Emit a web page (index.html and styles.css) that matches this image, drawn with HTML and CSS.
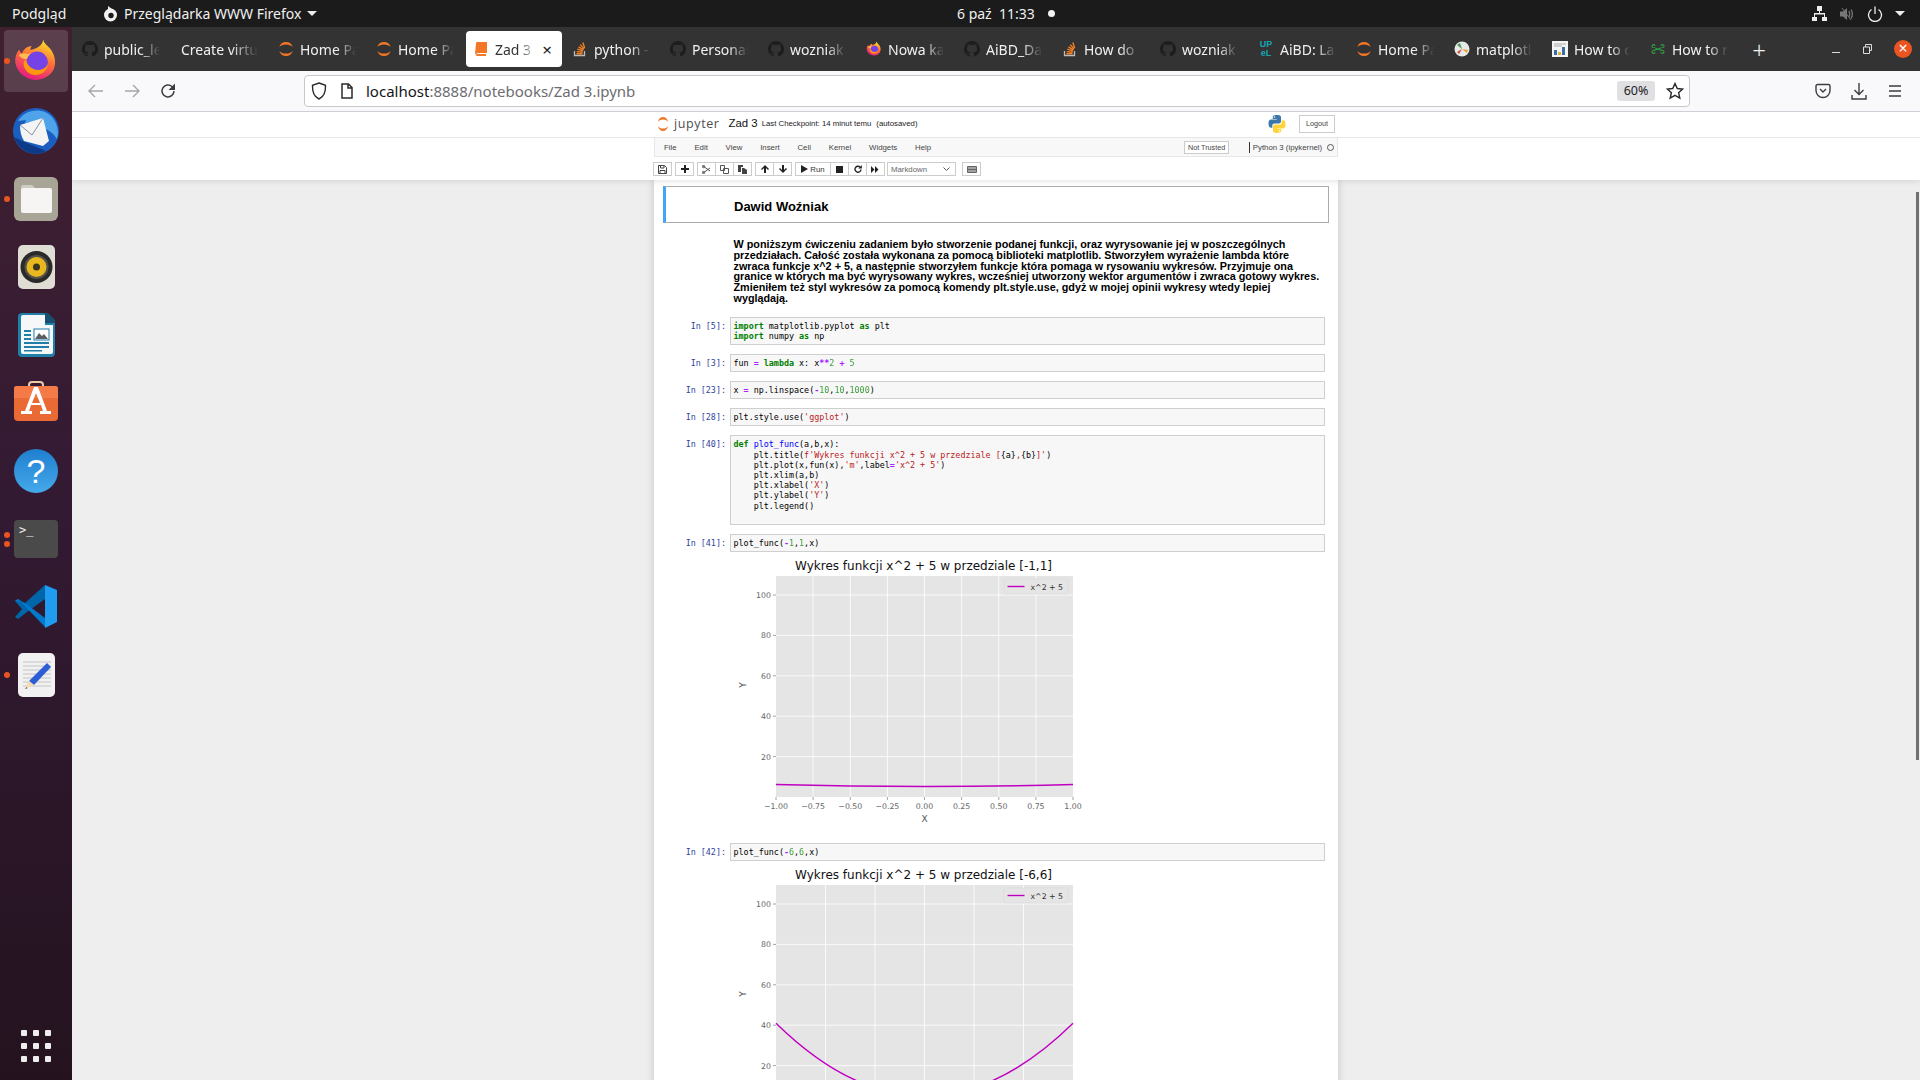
FILE: index.html
```html
<!DOCTYPE html>
<html lang="pl">
<head>
    <meta charset="UTF-8">
    <meta name="viewport" content="width=device-width, initial-scale=1.0">
    <title>Zad 3 - Jupyter Notebook</title>
    <link rel="stylesheet" href="styles.css">
</head>
<body>

    <svg class="defs" width="0" height="0">
        <defs>
            <symbol id="gh" viewBox="0 0 16 16">
                <path fill="#1d1d1f" d="M8 0a8 8 0 0 0-2.5 15.6c.4.1.5-.2.5-.4v-1.4c-2.2.5-2.7-1-2.7-1-.4-.9-.9-1.2-.9-1.2-.7-.5.1-.5.1-.5.8.1 1.2.8 1.2.8.7 1.2 1.9.9 2.3.7.1-.5.3-.9.5-1.1-1.8-.2-3.6-.9-3.6-4 0-.9.3-1.6.8-2.1-.1-.2-.4-1 .1-2.1 0 0 .7-.2 2.2.8a7.5 7.5 0 0 1 4 0c1.5-1 2.2-.8 2.2-.8.5 1.1.2 1.9.1 2.1.5.5.8 1.2.8 2.1 0 3.1-1.9 3.8-3.7 4 .3.3.6.7.6 1.5v2.2c0 .2.1.5.5.4A8 8 0 0 0 8 0z"/>
            </symbol>
            <symbol id="jup" viewBox="0 0 16 16">
                <path fill="#f37726" d="M8 12.6c-2.9 0-5.4-1-6.7-2.6a7 7 0 0 0 13.4 0c-1.3 1.6-3.8 2.6-6.7 2.6z"/>
                <path fill="#f37726" d="M8 3.4c2.9 0 5.4 1 6.7 2.6A7 7 0 0 0 1.3 6C2.6 4.4 5.1 3.4 8 3.4z"/>
            </symbol>
            <symbol id="so" viewBox="0 0 16 16">
                <path fill="none" stroke="#bcbbbb" stroke-width="1.3" d="M2.5 10v4.5h10V10"/>
                <path fill="none" stroke="#f48024" stroke-width="1.4" d="M4.5 12.8h6M4.7 10.6l5.9.7M5.3 8.2l5.6 1.7M6.5 5.8l5 3M8.3 3.6l3.8 4.5M10.8 1.5l1.9 5.4"/>
            </symbol>
            <symbol id="fx" viewBox="0 0 32 32">
                <defs>
                    <linearGradient id="fxg" x1="0.7" y1="0" x2="0.3" y2="1">
                        <stop offset="0" stop-color="#ffe226"/>
                        <stop offset="0.45" stop-color="#ff7139"/>
                        <stop offset="1" stop-color="#e31587"/>
                    </linearGradient>
                </defs>
                <path fill="url(#fxg)" d="M21 1c.6 3.4 4 4.6 6 8 2.6 4.3 3.2 9.6.6 14.2A14.5 14.5 0 0 1 1.6 17C1.3 13.8 2.2 10.5 4.3 8c.3 1.3 1 2.2 2 2.7C7.4 7.6 10 5.8 13 5.6c-.9 1.1-1 2-.8 2.7 3.4-.8 8.6-2.6 8.8-7.300z"/>
                <path fill="#ffbd4f" d="M4 12c2-1.5 4.5-1.8 6.5-.8 1.7-.6 3.5-.7 5-.2-3 .3-5 1.8-5.8 3.8-2 .1-4-.8-5.700-2.800z"/>
                <circle cx="16.8" cy="16.8" r="7.4" fill="#7542e5"/>
                <path fill="#ff980e" d="M9 15c1 4.8 5 7.5 9 7.2 3-.2 5.500-2 6.400-4.500-.4 5-4.300 8-8.700 8-4.800 0-8.300-3.800-8.300-8 0-1 .6-2 1.600-2.700z"/>
            </symbol>
        </defs>
    </svg>

    <div class="topbar">
        <span class="top-item">Podgląd</span>
        <span class="top-app">
            <svg width="16" height="16" viewBox="0 0 16 16"><circle cx="8.5" cy="9" r="6.5" fill="#f2f2f2"/><circle cx="9" cy="9.5" r="2.7" fill="#1c1c1c"/><path fill="#f2f2f2" d="M6 0l4 3-4 2z"/></svg>
            Przeglądarka WWW Firefox
            <span class="caret"></span>
        </span>
        <span class="clock">6 paź&nbsp; 11:33 <span class="rec-dot"></span></span>
        <span class="top-tray">
            <svg width="15" height="16" viewBox="0 0 15 16"><path fill="#eee" d="M5 0h5v5H8v2h5v4h2v4h-5v-4h2V8.5H3V11h2v4H0v-4h2V7h5V5H5z"/></svg>
            <svg width="16" height="16" viewBox="0 0 16 16"><path fill="#777" d="M1 5.5h3L8 2v12l-4-3.5H1z"/><path fill="none" stroke="#777" stroke-width="1.3" d="M10 5c1 2 1 4 0 6M12 3.5c1.800 3 1.800 6 0 9"/><path stroke="#777" d="M3 2l9 12"/></svg>
            <svg width="16" height="16" viewBox="0 0 16 16"><path fill="none" stroke="#eee" stroke-width="1.3" d="M4.5 3.5a6.5 6.5 0 1 0 7 0M8 .5V8"/></svg>
            <span class="caret"></span>
        </span>
    </div>

    <div class="desktop">
        <div class="dock">
            <div class="dock-item active">
                <span class="run-dot"></span>
                <svg width="46" height="46"><use href="#fx"/></svg>
            </div>
            <div class="dock-item">
                <svg width="48" height="48" viewBox="0 0 48 48">
                    <circle cx="24" cy="24" r="23" fill="#1a5fc0"/>
                    <path fill="#0c3a86" d="M2 30c3 8 10 16 22 17 4 0 7-1 10-3L10 34z"/>
                    <path fill="#4fa3ea" d="M6 14C12 3 30-1 40 10c6 7 7 16 5 22-3-5-8-9-14-11L20 15l-7 1 1-3z"/>
                    <path fill="#f4f4f4" d="M8 18l23-7 6 23-6 5-19-5c-3-5-4-10-4-16z"/>
                    <path fill="none" stroke="#8a8fa0" d="M8 18l12 10 11-17"/>
                </svg>
            </div>
            <div class="dock-item">
                <span class="run-dot"></span>
                <svg width="44" height="44" viewBox="0 0 44 44">
                    <rect width="44" height="44" rx="6" fill="#a9a596"/>
                    <path fill="#cfccc2" d="M7 10a2 2 0 0 1 2-2h9l4 4H7z"/>
                    <rect x="7" y="11" width="31" height="25" rx="2" fill="#f6f5f3"/>
                </svg>
            </div>
            <div class="dock-item">
                <svg width="37" height="44" viewBox="0 0 37 44">
                    <rect width="37" height="44" rx="5" fill="#e0ddd4"/>
                    <circle cx="18.5" cy="22" r="16" fill="#2a2a2a"/>
                    <circle cx="18.5" cy="22" r="12" fill="#55524c"/>
                    <circle cx="18.5" cy="22" r="10" fill="#e8b81e"/>
                    <circle cx="18.5" cy="22" r="3.5" fill="#3a3420"/>
                </svg>
            </div>
            <div class="dock-item">
                <svg width="37" height="44" viewBox="0 0 37 44">
                    <path fill="#1f7fa8" d="M4 0h24l9 9v31a4 4 0 0 1-4 4H4a4 4 0 0 1-4-4V4a4 4 0 0 1 4-4z"/>
                    <path fill="#f5f7f8" d="M5 2h22v10h8v27a2 2 0 0 1-2 2H5a2 2 0 0 1-2-2V4a2 2 0 0 1 2-2z"/>
                    <path fill="#17506e" d="M27 0h3l7 7v3h-10z"/>
                    <path fill="#1f7fa8" d="M6 17h7v2H6zM6 21h7v2H6zM6 25h7v2H6zM6 29h25v2H6zM6 33h25v2H6zM6 37h18v1.5H6z"/>
                    <rect x="16" y="16" width="15" height="11" fill="#fff" stroke="#1f7fa8"/>
                    <path fill="#5a5f63" d="M17 26l4-6 3 3 2-2 4 5z"/>
                </svg>
            </div>
            <div class="dock-item">
                <svg class="bag" width="44" height="42" viewBox="0 0 44 42">
                    <path fill="none" stroke="#f0c9a8" stroke-width="2" d="M15 9V6a3 3 0 0 1 3-3h8a3 3 0 0 1 3 3v3"/>
                    <path fill="#ea6a35" d="M3 7h38a3 3 0 0 1 3 3v28a4 4 0 0 1-4 4H4a4 4 0 0 1-4-4V10a3 3 0 0 1 3-3z"/>
                    <path fill="#f47a47" d="M3 7h38a3 3 0 0 1 3 3v9H0v-9a3 3 0 0 1 3-3z"/>
                    <path fill="#fff" d="M20 8h4l9 24h4v3H26v-3h3l-2-6H17l-2 6h3v3H7v-3h4zM22 14l-4 10h8z"/>
                </svg>
            </div>
            <div class="dock-item">
                <div class="help-icon">?</div>
            </div>
            <div class="dock-item">
                <span class="run-dot double"></span>
                <div class="term-icon">&gt;_</div>
            </div>
            <div class="dock-item">
                <svg width="44" height="44" viewBox="0 0 44 44">
                    <path fill="#0065a9" d="M1 16l3-2 7 4L31 0v14L13 27 4 34l-3-2 7-8z"/>
                    <path fill="#007acc" d="M1 16l3-2 27 28v-9L11 18z"/>
                    <path fill="#1f9cf0" d="M31 0l12 5v32l-12 6z"/>
                </svg>
            </div>
            <div class="dock-item">
                <span class="run-dot"></span>
                <svg width="37" height="44" viewBox="0 0 37 44">
                    <rect width="37" height="44" rx="5" fill="#f1f1f1"/>
                    <path stroke="#c4c4c4" d="M5 9h28M5 13h28M5 17h28M5 21h28M5 25h28M5 29h28M5 33h28"/>
                    <path fill="#2c5fd6" d="M29 10l4 4-17 18-5-4z"/>
                    <path fill="#f7d9b0" d="M11 28l5 4-9 4z"/>
                    <path fill="#555" d="M8.5 34L7 36l2.5-.8z"/>
                </svg>
            </div>
            <div class="dock-grid">
                <i></i><i></i><i></i><i></i><i></i><i></i><i></i><i></i><i></i>
            </div>
        </div>

        <div class="browser">
            <div class="tabs">
                <div class="tab"><svg width="16" height="16"><use href="#gh"/></svg><span>public_le</span></div>
                <div class="tab no-icon"><span>Create virtu</span></div>
                <div class="tab"><svg width="16" height="16"><use href="#jup"/></svg><span>Home Pa</span></div>
                <div class="tab"><svg width="16" height="16"><use href="#jup"/></svg><span>Home Pa</span></div>
                <div class="tab current">
                    <svg width="16" height="16" viewBox="0 0 16 16"><path fill="#f37726" d="M4 1h10v11H5a2 2 0 0 0-2 1.5L2 13 3 2.5A2 2 0 0 1 4 1z"/><path fill="#f37726" d="M3.5 15a1.5 1.5 0 0 1 0-2H13v2z"/></svg>
                    <span>Zad 3 - J</span>
                    <b class="tab-x">×</b>
                </div>
                <div class="tab"><svg width="16" height="16"><use href="#so"/></svg><span>python -</span></div>
                <div class="tab"><svg width="16" height="16"><use href="#gh"/></svg><span>Personal</span></div>
                <div class="tab"><svg width="16" height="16"><use href="#gh"/></svg><span>wozniak</span></div>
                <div class="tab"><svg width="16" height="16"><use href="#fx"/></svg><span>Nowa ka</span></div>
                <div class="tab"><svg width="16" height="16"><use href="#gh"/></svg><span>AiBD_Da</span></div>
                <div class="tab"><svg width="16" height="16"><use href="#so"/></svg><span>How do</span></div>
                <div class="tab"><svg width="16" height="16"><use href="#gh"/></svg><span>wozniak</span></div>
                <div class="tab"><div class="upel">UP<br>eL</div><span>AiBD: La</span></div>
                <div class="tab"><svg width="16" height="16"><use href="#jup"/></svg><span>Home Pa</span></div>
                <div class="tab">
                    <svg width="16" height="16" viewBox="0 0 16 16"><circle cx="8" cy="8" r="7.5" fill="#e8e8e8"/><path fill="#4c9c5a" d="M8 8L3 4l3-2z"/><path fill="#e8a23a" d="M8 8l6 1-1 3z"/><path fill="#c7503a" d="M8 8l-3 5-2-2z"/></svg>
                    <span>matplotl</span>
                </div>
                <div class="tab">
                    <svg width="16" height="16" viewBox="0 0 16 16"><rect width="16" height="16" fill="#f4f4f4"/><path fill="#3a6ea5" d="M2 14V9h3v5zM10 14V6h3v8z"/><path fill="#e0b040" d="M6 14v-3h3v3z"/><path stroke="#aaa" d="M2 3h12M2 5h8"/></svg>
                    <span>How to c</span>
                </div>
                <div class="tab">
                    <svg width="16" height="16" viewBox="0 0 16 16"><path fill="none" stroke="#2f9e44" stroke-width="1.1" d="M3 6.5c3 0 7 3 10 3M3 9.5c3 0 7-3 10-3M5 5a1.5 1.5 0 1 0-2 1.5M11 5a1.5 1.5 0 1 1 2 1.5M5 11a1.5 1.5 0 1 1-2-1.5M11 11a1.5 1.5 0 1 0 2-1.5"/></svg>
                    <span>How to r</span>
                </div>
                <div class="new-tab">+</div>
                <div class="win-btns">
                    <span class="win-min"></span>
                    <svg width="10" height="10" viewBox="0 0 10 10"><path fill="none" stroke="#ddd" d="M1.5 3h6v6.5h-6zM3.5 3V.5h6v6H7.5"/></svg>
                    <span class="win-close">×</span>
                </div>
            </div>

            <div class="navbar">
                <svg width="18" height="18" viewBox="0 0 18 18"><path fill="none" stroke="#a6a6a8" stroke-width="1.4" d="M16 9H2M8 3L2 9l6 6"/></svg>
                <svg width="18" height="18" viewBox="0 0 18 18"><path fill="none" stroke="#a6a6a8" stroke-width="1.4" d="M2 9h14M10 3l6 6-6 6"/></svg>
                <svg width="18" height="18" viewBox="0 0 18 18"><path fill="none" stroke="#3d3d3f" stroke-width="1.5" d="M15 9a6 6 0 1 1-2-4.5L15.5 7"/><path fill="#3d3d3f" d="M16 1.5V8h-6.500z"/></svg>
                <div class="urlbar">
                    <svg width="16" height="18" viewBox="0 0 16 18"><path fill="none" stroke="#2b2b2d" stroke-width="1.4" d="M8 1l6.5 2.3C14.800 10 12.500 15 8 17 3.500 15 1.200 10 1.500 3.300z"/></svg>
                    <svg width="14" height="16" viewBox="0 0 14 16"><path fill="none" stroke="#2b2b2d" stroke-width="1.5" d="M2 1h6.5L12 4.5V15H2zM8 1v4h4"/></svg>
                    <div class="url"><span class="host">localhost</span>:8888/notebooks/Zad 3.ipynb</div>
                    <span class="zoom-badge">60%</span>
                    <svg width="18" height="18" viewBox="0 0 18 18"><path fill="none" stroke="#2b2b2d" stroke-width="1.4" d="M9 1.5l2.3 5 5.3.6-4 3.600 1.200 5.400L9 13.300l-4.800 2.800 1.200-5.400-4-3.600 5.300-.6z"/></svg>
                </div>
                <div class="nav-right">
                    <svg width="16" height="16" viewBox="0 0 16 16"><path fill="none" stroke="#3d3d3f" stroke-width="1.4" d="M2.5 1.500h11a1.500 1.500 0 0 1 1.500 1.500v4.500a7 7 0 0 1-14 0V3a1.500 1.500 0 0 1 1.500-1.500zM5 6l3 3 3-3"/></svg>
                    <svg width="16" height="18" viewBox="0 0 16 18"><path fill="none" stroke="#3d3d3f" stroke-width="1.4" d="M8 1v11M3.5 8L8 12.5 12.5 8M1 13v4h14v-4"/></svg>
                    <svg width="16" height="14" viewBox="0 0 16 14"><path fill="none" stroke="#3d3d3f" stroke-width="1.5" d="M2 2h12M2 7h12M2 12h12"/></svg>
                </div>
            </div>

            <div class="page">
                <div class="nb-header">
                    <div class="head-top">
                        <div class="head-inner">
                            <svg class="jup-logo" width="12" height="16" viewBox="0 0 16 16" preserveAspectRatio="none">
                                <path fill="#f37726" d="M8 12.6c-2.9 0-5.4-1-6.7-2.6a7 7 0 0 0 13.4 0c-1.3 1.6-3.8 2.6-6.7 2.6z"/>
                                <path fill="#f37726" d="M8 3.4c2.9 0 5.4 1 6.7 2.6A7 7 0 0 0 1.3 6C2.6 4.4 5.1 3.4 8 3.4z"/>
                            </svg>
                            <span class="jup-word">jupyter</span>
                            <span class="nb-name">Zad 3</span>
                            <span class="checkpoint">Last Checkpoint: 14 minut temu</span>
                            <span class="checkpoint saved">(autosaved)</span>
                            <svg class="py-logo" width="18" height="18" viewBox="0 0 18 18">
                                <path fill="#3b77a8" d="M8.8 0C4.5 0 4.8 1.9 4.8 1.9v2h4.100v.6H3.200S.5 4.200.5 8.600s2.400 4.200 2.400 4.200h1.400v-2s-.1-2.400 2.300-2.400h4.100s2.300 0 2.300-2.200V2.300S13.400 0 8.800 0zM6.500 1.300a.75.75 0 1 1 0 1.500.75.75 0 0 1 0-1.500z"/>
                                <path fill="#ffd43b" d="M9.2 18c4.3 0 4-1.9 4-1.9v-2H9.100v-.6h5.700s2.700.3 2.700-4.100-2.400-4.200-2.400-4.200h-1.400v2s.1 2.400-2.300 2.400H7.300s-2.300 0-2.300 2.200v3.900S4.600 18 9.200 18zm2.300-1.300a.75.75 0 1 1 0-1.500.75.75 0 0 1 0 1.500z"/>
                            </svg>
                            <span class="logout">Logout</span>
                        </div>
                    </div>
                    <div class="head-inner column">
                        <div class="menubar">
                            <span>File</span><span>Edit</span><span>View</span><span>Insert</span><span>Cell</span><span>Kernel</span><span>Widgets</span><span>Help</span>
                            <span class="not-trusted">Not Trusted</span>
                            <span class="kernel">Python 3 (ipykernel)</span>
                            <i class="kernel-dot"></i>
                        </div>
                        <div class="toolbar">
                            <div class="btn-group"><button>
                                <svg width="9" height="9" viewBox="0 0 9 9"><path fill="none" stroke="#444" d="M.5.5h6l2 2v6h-8zM2.5.5V3H6V.5M2 8.500V5.500h5v3"/></svg>
                            </button></div>
                            <div class="btn-group"><button>
                                <svg width="8" height="8" viewBox="0 0 8 8"><path stroke="#222" stroke-width="2" d="M4 0v8M0 4h8"/></svg>
                            </button></div>
                            <div class="btn-group">
                                <button><svg width="9" height="9" viewBox="0 0 9 9"><path fill="none" stroke="#555" d="M1 1l7 5M1 8l7-5"/><circle cx="1.5" cy="1.5" r="1.2" fill="none" stroke="#555"/><circle cx="1.5" cy="7.5" r="1.2" fill="none" stroke="#555"/></svg></button>
                                <button><svg width="9" height="9" viewBox="0 0 9 9"><path fill="none" stroke="#555" d="M.5.5h4v5h-4zM3.5 3.5h5v5h-5z"/></svg></button>
                                <button><svg width="9" height="9" viewBox="0 0 9 9"><path fill="#444" d="M0 0h5v2h-2v5H0zM4 3h2l3 2v4H4z"/></svg></button>
                            </div>
                            <div class="btn-group">
                                <button><svg width="8" height="8" viewBox="0 0 8 8"><path fill="#222" d="M4 0l4 4-1 1-2-2v5H3V3L1 5 0 4z"/></svg></button>
                                <button><svg width="8" height="8" viewBox="0 0 8 8"><path fill="#222" d="M4 8L0 4l1-1 2 2V0h2v5l2-2 1 1z"/></svg></button>
                            </div>
                            <div class="btn-group">
                                <button class="run-btn"><svg width="7" height="8" viewBox="0 0 7 8"><path fill="#222" d="M0 0l7 4-7 4z"/></svg> Run</button>
                                <button><svg width="7" height="7"><rect width="7" height="7" fill="#222"/></svg></button>
                                <button><svg width="8" height="8" viewBox="0 0 8 8"><path fill="none" stroke="#222" stroke-width="1.4" d="M7 4.5A3 3 0 1 1 6 2"/><path fill="#222" d="M7.8 0v3.5H4.3z"/></svg></button>
                                <button><svg width="9" height="7" viewBox="0 0 9 7"><path fill="#222" d="M0 0l3.5 3.5L0 7zM4 0l3.5 3.5L4 7z"/></svg></button>
                            </div>
                            <div class="cell-type">Markdown<svg width="7" height="4" viewBox="0 0 7 4"><path fill="none" stroke="#555" d="M.5.5l3 3 3-3"/></svg></div>
                            <div class="btn-group kb"><button>
                                <svg width="10" height="7" viewBox="0 0 10 7"><rect width="10" height="7" rx="1" fill="#666"/><path stroke="#ddd" d="M1 2h8M1 5h8"/></svg>
                            </button></div>
                        </div>
                    </div>
                </div>

                <div class="notebook">
                    <div class="heading-cell">Dawid Woźniak</div>
                    <p class="md-text">W poniższym ćwiczeniu zadaniem było stworzenie podanej funkcji, oraz wyrysowanie jej w poszczególnych przedziałach. Całość została wykonana za pomocą biblioteki matplotlib. Stworzyłem wyrażenie lambda które zwraca funkcje x^2 + 5, a następnie stworzyłem funkcje która pomaga w rysowaniu wykresów. Przyjmuje ona granice w których ma być wyrysowany wykres, wcześniej utworzony wektor argumentów i zwraca gotowy wykres. Zmieniłem też styl wykresów za pomocą komendy plt.style.use, gdyż w mojej opinii wykresy wtedy lepiej wyglądają.</p>

                    <div class="cells">
                        <div class="cell">
                            <div class="prompt">In [5]:</div>
                            <pre class="code"><b>import</b> matplotlib.pyplot <b>as</b> plt
<b>import</b> numpy <b>as</b> np</pre>
                        </div>
                        <div class="cell">
                            <div class="prompt">In [3]:</div>
                            <pre class="code">fun <em>=</em> <b>lambda</b> x: x<em>**</em><u>2</u> <em>+</em> <u>5</u></pre>
                        </div>
                        <div class="cell">
                            <div class="prompt">In [23]:</div>
                            <pre class="code">x <em>=</em> np.linspace(<em>-</em><u>10</u>,<u>10</u>,<u>1000</u>)</pre>
                        </div>
                        <div class="cell">
                            <div class="prompt">In [28]:</div>
                            <pre class="code">plt.style.use(<s>'ggplot'</s>)</pre>
                        </div>
                        <div class="cell">
                            <div class="prompt">In [40]:</div>
                            <pre class="code"><b>def</b> <i>plot_func</i>(a,b,x):
    plt.title(<s>f'Wykres funkcji x^2 + 5 w przedziale [</s>{a}<s>,</s>{b}<s>]'</s>)
    plt.plot(x,fun(x),<s>'m'</s>,label<em>=</em><s>'x^2 + 5'</s>)
    plt.xlim(a,b)
    plt.xlabel(<s>'X'</s>)
    plt.ylabel(<s>'Y'</s>)
    plt.legend()

</pre>
                        </div>
                        <div class="cell">
                            <div class="prompt">In [41]:</div>
                            <pre class="code">plot_func(<em>-</em><u>1</u>,<u>1</u>,x)</pre>
                        </div>
                        <svg class="chart" width="360" height="270" viewBox="0 0 360 270">
                            <text class="c-title" x="188.5" y="14">Wykres funkcji x^2 + 5 w przedziale [-1,1]</text>
                            <rect x="41" y="20" width="297" height="221" fill="#e5e5e5"/>
                            <path class="c-grid" d="M41 39h297M41 79.4h297M41 119.8h297M41 160.2h297M41 200.6h297M78.1 20v221M115.3 20v221M152.4 20v221M189.5 20v221M226.6 20v221M263.8 20v221M300.9 20v221"/>
                            <path class="c-tick" d="M38 39h3M38 79.4h3M38 119.8h3M38 160.2h3M38 200.6h3M41 241v3M78.1 241v3M115.3 241v3M152.4 241v3M189.5 241v3M226.6 241v3M263.8 241v3M300.9 241v3M338 241v3"/>
                            <path class="c-line" d="M41 228.5Q189.5 232.5 338 228.5"/>
                            <g class="c-ylab"><text x="36" y="42">100</text><text x="36" y="82.4">80</text><text x="36" y="122.8">60</text><text x="36" y="163.2">40</text><text x="36" y="203.6">20</text></g>
                            <g class="c-xlab"><text x="41" y="253">−1.00</text><text x="78.1" y="253">−0.75</text><text x="115.3" y="253">−0.50</text><text x="152.4" y="253">−0.25</text><text x="189.5" y="253">0.00</text><text x="226.6" y="253">0.25</text><text x="263.8" y="253">0.50</text><text x="300.9" y="253">0.75</text><text x="338" y="253">1.00</text></g>
                            <text class="c-axis" x="189.5" y="266">X</text>
                            <text class="c-axis" transform="translate(11 129) rotate(-90)">Y</text>
                            <rect class="c-legend" x="269" y="23" width="64" height="15" rx="1.5"/>
                            <path class="c-line" d="M272.5 30.5h17"/>
                            <text class="c-leg" x="295.5" y="33.5">x^2 + 5</text>
                        </svg>
                        <div class="cell after-chart">
                            <div class="prompt">In [42]:</div>
                            <pre class="code">plot_func(<em>-</em><u>6</u>,<u>6</u>,x)</pre>
                        </div>
                        <svg class="chart" width="360" height="270" viewBox="0 0 360 270">
                            <text class="c-title" x="188.5" y="14">Wykres funkcji x^2 + 5 w przedziale [-6,6]</text>
                            <rect x="41" y="20" width="297" height="221" fill="#e5e5e5"/>
                            <path class="c-grid" d="M41 39h297M41 79.4h297M41 119.8h297M41 160.2h297M41 200.6h297M90.5 20v221M140 20v221M189.5 20v221M239 20v221M288.5 20v221"/>
                            <path class="c-tick" d="M38 39h3M38 79.4h3M38 119.8h3M38 160.2h3M38 200.6h3"/>
                            <path class="c-line" d="M41 158.2Q189.5 303.6 338 158.2"/>
                            <g class="c-ylab"><text x="36" y="42">100</text><text x="36" y="82.4">80</text><text x="36" y="122.8">60</text><text x="36" y="163.2">40</text><text x="36" y="203.6">20</text></g>
                            <text class="c-axis" transform="translate(11 129) rotate(-90)">Y</text>
                            <rect class="c-legend" x="269" y="23" width="64" height="15" rx="1.5"/>
                            <path class="c-line" d="M272.5 30.5h17"/>
                            <text class="c-leg" x="295.5" y="33.5">x^2 + 5</text>
                        </svg>
                    </div>
                </div>
                <div class="page-scroll"></div>
            </div>
        </div>
    </div>

</body>
</html>
```

FILE: styles.css
```css
* {
    box-sizing: border-box;
}
html, body {
    margin: 0;
    height: 1080px;
    overflow: hidden;
}
body {
    font-family: "Liberation Sans", Arial, sans-serif;
    display: flex;
    flex-direction: column;
    background: #333;
}
.defs {
    position: absolute;
}

/* ubuntu top bar */
.topbar {
    height: 27px;
    flex: none;
    background: #1b1b1b;
    color: #f0f0f0;
    font-family: "Noto Sans", sans-serif;
    font-size: 14px;
    display: flex;
    align-items: center;
    padding-left: 12px;
    position: relative;
}
.top-item {
    width: 90px;
}
.top-app {
    display: flex;
    align-items: center;
    gap: 6px;
}
.caret {
    width: 0;
    height: 0;
    border-left: 5px solid transparent;
    border-right: 5px solid transparent;
    border-top: 5px solid #eee;
}
.clock {
    position: absolute;
    left: 957px;
    display: flex;
    align-items: center;
    gap: 12px;
}
.rec-dot {
    width: 7px;
    height: 7px;
    border-radius: 50%;
    background: #f2f2f2;
    margin-left: 1px;
}
.top-tray {
    margin-left: auto;
    display: flex;
    align-items: center;
    gap: 12px;
    padding-right: 15px;
}

.desktop {
    flex: 1;
    display: flex;
    min-height: 0;
}

/* left dock */
.dock {
    width: 72px;
    flex: none;
    background: linear-gradient(#40202f, #331a33 45%, #24131f);
    display: flex;
    flex-direction: column;
    align-items: center;
}
.dock-item {
    width: 64px;
    height: 68px;
    display: flex;
    align-items: center;
    justify-content: center;
    position: relative;
}
.dock-item.active {
    background: rgba(255, 255, 255, 0.14);
    height: 62px;
    margin: 3px 0 5px;
    border-radius: 4px;
}
.bag {
    margin-top: -6px;
}
.run-dot {
    position: absolute;
    left: 0;
    top: 50%;
    width: 6px;
    height: 6px;
    margin-top: -3px;
    border-radius: 50%;
    background: #e95420;
}
.run-dot.double {
    margin-top: -7px;
    box-shadow: 0 9px 0 #e95420;
}
.help-icon {
    width: 44px;
    height: 44px;
    border-radius: 50%;
    background: linear-gradient(#1f7fd0, #45a9ea);
    color: #fff;
    font-size: 34px;
    line-height: 44px;
    text-align: center;
}
.term-icon {
    width: 44px;
    height: 38px;
    background: #4a4a4a;
    border-radius: 4px;
    color: #eee;
    font-family: "DejaVu Sans Mono", monospace;
    font-size: 12px;
    line-height: 12px;
    padding: 4px 5px;
}
.dock-grid {
    margin-top: auto;
    margin-bottom: 18px;
    display: grid;
    grid-template-columns: repeat(3, 6px);
    gap: 7px 6px;
}
.dock-grid i {
    width: 6px;
    height: 6px;
    border-radius: 1px;
    background: #eee;
}

/* firefox */
.browser {
    flex: 1;
    display: flex;
    flex-direction: column;
    min-width: 0;
}
.tabs {
    height: 44px;
    flex: none;
    background: #333;
    display: flex;
    align-items: center;
    padding-left: 4px;
    font-family: "Noto Sans", sans-serif;
    font-size: 14px;
    color: #f0f0f0;
}
.tab {
    width: 98px;
    height: 36px;
    flex: none;
    display: flex;
    align-items: center;
    gap: 6px;
    padding-left: 6px;
    overflow: hidden;
    white-space: nowrap;
}
.tab svg, .tab .upel {
    flex: none;
}
.tab span {
    width: 56px;
    overflow: hidden;
    -webkit-mask-image: linear-gradient(90deg, #000 65%, transparent);
    mask-image: linear-gradient(90deg, #000 65%, transparent);
}
.tab.no-icon {
    padding-left: 7px;
}
.tab.no-icon span {
    width: 77px;
}
.tab.current {
    background: #fff;
    color: #333;
    border-radius: 4px;
    width: 96px;
    margin: 0 4px 0 -2px;
    padding-left: 7px;
}
.tab.current span {
    width: 40px;
}
.tab-x {
    font-weight: normal;
    font-size: 17px;
    color: #222;
    margin-left: auto;
    margin-right: 10px;
}
.upel {
    width: 16px;
    color: #12a5b5;
    font-family: "Liberation Sans", sans-serif;
    font-weight: bold;
    font-size: 9px;
    line-height: 9px;
    text-align: center;
}
.new-tab {
    font-size: 24px;
    font-weight: 300;
    margin-left: 8px;
    width: 18px;
    text-align: center;
}
.win-btns {
    margin-left: auto;
    display: flex;
    align-items: center;
    gap: 22px;
    padding-right: 8px;
}
.win-min {
    width: 8px;
    height: 1.5px;
    background: #ddd;
    margin-top: 7px;
}
.win-close {
    width: 18px;
    height: 18px;
    border-radius: 50%;
    background: #e95420;
    color: #fff;
    font-size: 16px;
    line-height: 17px;
    text-align: center;
}

.navbar {
    height: 41px;
    flex: none;
    background: #f9f9fb;
    border-bottom: 1px solid #cfcfd8;
    display: flex;
    align-items: center;
    padding-left: 15px;
    gap: 18px;
}
.urlbar {
    width: 1386px;
    height: 32px;
    margin-left: 109px;
    background: #fff;
    border: 1px solid #c8c8cc;
    border-radius: 4px;
    display: flex;
    align-items: center;
    padding: 0 5px 0 6px;
    gap: 13px;
}
.url {
    font-family: "Noto Sans", sans-serif;
    font-size: 15px;
    color: #6d6d72;
    flex: 1;
    white-space: nowrap;
    margin-left: -1px;
}
.host {
    color: #15141a;
}
.zoom-badge {
    width: 38px;
    height: 20px;
    margin-right: -2px;
    background: #e0e0e2;
    border-radius: 3px;
    font-family: "Noto Sans", sans-serif;
    font-size: 12.5px;
    line-height: 20px;
    text-align: center;
    color: #222;
}
.nav-right {
    display: flex;
    align-items: center;
    gap: 20px;
    margin-left: 107px;
}

/* jupyter page */
.page {
    flex: 1;
    background: #eee;
    position: relative;
    overflow: hidden;
    min-height: 0;
}
.nb-header {
    height: 68px;
    background: #fff;
    box-shadow: 0 1px 6px rgba(0, 0, 0, 0.12);
    position: relative;
    z-index: 1;
}
.head-top {
    height: 26px;
    border-bottom: 1px solid #e7e7e7;
}
.head-inner {
    width: 684px;
    margin: 0 auto;
    display: flex;
    align-items: center;
    height: 100%;
    padding-bottom: 2px;
}
.head-inner.column {
    flex-direction: column;
    align-items: stretch;
    height: auto;
    padding-bottom: 0;
}
.jup-logo {
    margin-left: 3px;
}
.jup-word {
    font-family: "Open Sans", sans-serif;
    font-size: 12.5px;
    letter-spacing: 0.6px;
    color: #4e4e4e;
    margin-left: 5px;
}
.nb-name {
    font-size: 11.4px;
    color: #111;
    margin: 0 0 2px 9px;
}
.checkpoint {
    font-size: 7.8px;
    color: #222;
    margin-left: 4px;
}
.checkpoint.saved {
    margin-left: 5px;
}
.py-logo {
    margin-left: auto;
    margin-right: 13px;
}
.logout {
    width: 36px;
    height: 18px;
    margin-right: 3px;
    border: 1px solid #ccc;
    font-size: 7.2px;
    line-height: 16px;
    text-align: center;
    color: #444;
}
.menubar {
    height: 19px;
    background: #f8f8f8;
    border: 1px solid #e7e7e7;
    border-top: 0;
    display: flex;
    align-items: center;
    font-size: 7.8px;
    color: #444;
    padding-left: 9px;
    gap: 17.8px;
}
.not-trusted {
    margin-left: auto;
    width: 45px;
    height: 13px;
    border: 1px solid #ccc;
    background: #fff;
    font-size: 7.2px;
    line-height: 11px;
    text-align: center;
}
.kernel {
    margin-left: 2px;
    border-left: 1px solid #333;
    padding-left: 3px;
    font-size: 7.8px;
    line-height: 11px;
}
.kernel-dot {
    width: 7px;
    height: 7px;
    border: 1px solid #555;
    border-radius: 50%;
    margin: 0 3px 0 -13px;
}
.toolbar {
    display: flex;
    align-items: center;
    gap: 4px;
    padding-top: 5px;
    margin-left: -1px;
}
.btn-group {
    display: flex;
}
.btn-group button {
    height: 14px;
    width: 19px;
    padding: 0;
    background: #fff;
    border: 1px solid #ccc;
    margin-left: -1px;
    display: flex;
    align-items: center;
    justify-content: center;
    font-family: inherit;
    font-size: 7.8px;
    color: #333;
}
.btn-group:first-child button {
    margin-left: 0;
}
.btn-group button.run-btn {
    width: 36px;
    gap: 2px;
}
.cell-type {
    width: 69px;
    height: 14px;
    margin-left: -2px;
    border: 1px solid #ccc;
    font-size: 7.8px;
    color: #666;
    padding: 0 5px 0 3px;
    display: flex;
    align-items: center;
    justify-content: space-between;
}
.kb {
    margin-left: 3px;
}
.notebook {
    width: 684px;
    margin: 0 auto;
    height: 1200px;
    background: #fff;
    box-shadow: 0 0 8px rgba(0, 0, 0, 0.18);
    padding-top: 6px;
}
.heading-cell {
    margin-left: 9px;
    width: 666px;
    height: 37px;
    border: 1px solid #ababab;
    border-left: 3px solid #42a5f5;
    font-size: 13px;
    font-weight: bold;
    color: #000;
    line-height: 39px;
    padding-left: 68px;
}
.md-text {
    margin: 16px 14px 0 79.5px;
    font-size: 10.8px;
    line-height: 10.8px;
    font-weight: bold;
    color: #000;
}
.cells {
    margin-top: 13px;
    display: flex;
    flex-direction: column;
}
.cell {
    display: flex;
    margin-bottom: 8.9px;
}
.after-chart {
    margin-top: 17px;
}
.prompt {
    width: 72px;
    flex: none;
    text-align: right;
    font-family: "DejaVu Sans Mono", monospace;
    font-size: 8.4px;
    line-height: 10.2px;
    padding-top: 4px;
    color: #303f9f;
}
.code {
    margin: 0 13px 0 4px;
    flex: 1;
    background: #f7f7f7;
    border: 1px solid #cfcfcf;
    padding: 3px 2.5px;
    font-family: "DejaVu Sans Mono", monospace;
    font-size: 8.4px;
    line-height: 10.2px;
    color: #000;
}
.code b {
    color: #008000;
}
.code em {
    color: #aa22ff;
    font-style: normal;
    font-weight: bold;
}
.code u {
    color: #008000;
    text-decoration: none;
    opacity: 0.75;
}
.code s {
    color: #ba2121;
    text-decoration: none;
}
.code i {
    color: #0000ff;
    font-style: normal;
}
.chart {
    margin: -5px 0 0 81px;
    display: block;
}
.chart text {
    font-family: "DejaVu Sans", sans-serif;
}
.c-title {
    font-size: 12px;
    fill: #111;
    text-anchor: middle;
}
.c-grid {
    stroke: #fff;
    fill: none;
    stroke-width: 0.8;
}
.c-tick {
    stroke: #666;
    stroke-width: 0.6;
}
.c-line {
    stroke: #c000c0;
    stroke-width: 1.4;
    fill: none;
}
.c-ylab text {
    font-size: 7.8px;
    fill: #666;
    text-anchor: end;
}
.c-xlab text {
    font-size: 7.8px;
    fill: #666;
    text-anchor: middle;
}
.c-axis {
    font-size: 9px;
    fill: #555;
    text-anchor: middle;
}
.c-legend {
    fill: #e5e5e5;
    stroke: #d8d8d8;
    stroke-width: 0.6;
}
.c-leg {
    font-size: 7.8px;
    fill: #333;
}
.page-scroll {
    position: absolute;
    right: 1px;
    top: 80px;
    width: 3px;
    height: 568px;
    background: #707070;
    z-index: 2;
}
```
